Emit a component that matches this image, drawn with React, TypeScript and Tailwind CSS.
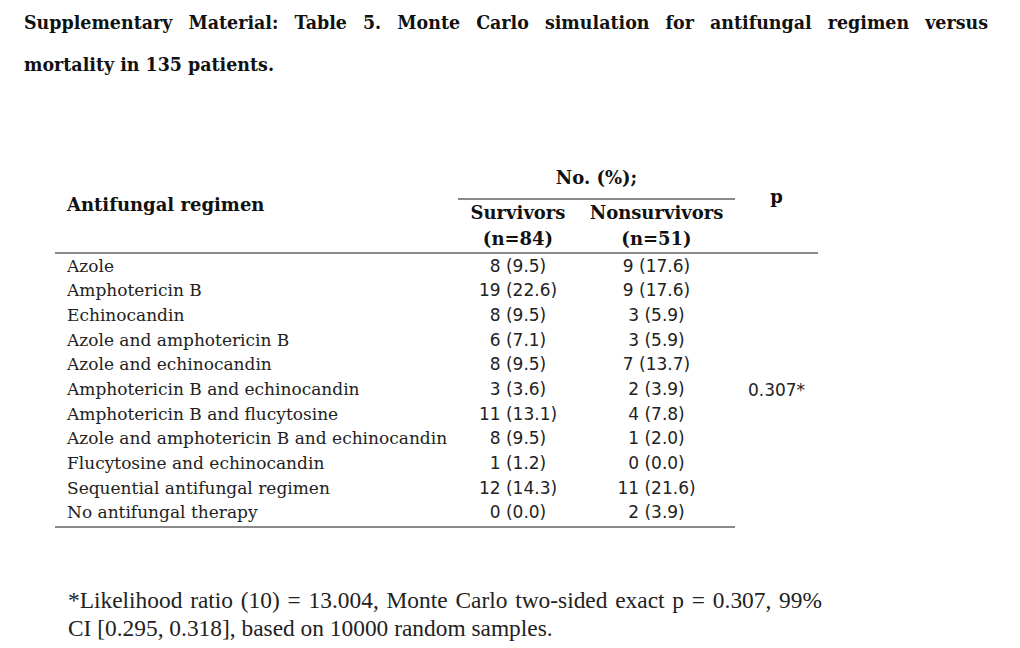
const SERIF = "font-['DejaVu_Serif',serif]";
const SERIF_COND = "font-['DejaVu_Serif_Condensed','DejaVu_Serif',serif]";
const SANS = "font-['DejaVu_Sans','Liberation_Sans',sans-serif]";

const ROWS: [string, string, string][] = [
  ["Azole", "8 (9.5)", "9 (17.6)"],
  ["Amphotericin B", "19 (22.6)", "9 (17.6)"],
  ["Echinocandin", "8 (9.5)", "3 (5.9)"],
  ["Azole and amphotericin B", "6 (7.1)", "3 (5.9)"],
  ["Azole and echinocandin", "8 (9.5)", "7 (13.7)"],
  ["Amphotericin B and echinocandin", "3 (3.6)", "2 (3.9)"],
  ["Amphotericin B and flucytosine", "11 (13.1)", "4 (7.8)"],
  ["Azole and amphotericin B and echinocandin", "8 (9.5)", "1 (2.0)"],
  ["Flucytosine and echinocandin", "1 (1.2)", "0 (0.0)"],
  ["Sequential antifungal regimen", "12 (14.3)", "11 (21.6)"],
  ["No antifungal therapy", "0 (0.0)", "2 (3.9)"],
];

export default function App() {
  return (
    <div className="h-[648px] w-[1020px] bg-white px-[24px] pt-[2px] text-[#111]">
      <div className={`${SERIF_COND} w-[964px] text-[19.4px] font-bold leading-[42px]`}>
        <p className="text-justify [text-align-last:justify]">
          Supplementary Material: Table 5. Monte Carlo simulation for antifungal regimen versus
        </p>
        <p>mortality in 135 patients.</p>
      </div>

      <div className="ml-[31px] mt-[79px] w-[763px]">
        {/* header */}
        <div className={`${SERIF} flex border-b-2 border-[#8a8a8a] text-[18px] font-bold`}>
          <div className="flex w-[403px] items-center pb-[8px] pl-[12px]">Antifungal regimen</div>
          <div className="w-[277px]">
            <div className="h-[35px] border-b-2 border-[#8a8a8a] text-center leading-[26px]">No. (%);</div>
            <div className="flex leading-[26px]">
              <div className="w-[120px] text-center">Survivors<br />(n=84)</div>
              <div className="w-[157px] text-center">Nonsurvivors<br />(n=51)</div>
            </div>
          </div>
          <div className="flex w-[83px] items-center justify-center pb-[24px]">p</div>
        </div>

        {/* body */}
        <div className="flex">
          <div className="w-[680px] border-b-2 border-[#8a8a8a]">
            {ROWS.map(([name, s, n]) => (
              <div key={name} className="flex h-[24.7px] items-center text-[17px] text-[#222]">
                <div className={`${SERIF} w-[403px] pl-[12px]`}>{name}</div>
                <div className={`${SANS} w-[120px] text-center`}>{s}</div>
                <div className={`${SANS} w-[157px] text-center`}>{n}</div>
              </div>
            ))}
          </div>
          <div className={`${SANS} w-[83px] pt-[123.5px] text-center text-[17px] leading-[24.7px] text-[#222]`}>
            0.307*
          </div>
        </div>

        <div className="mt-[58px] w-[767px] pl-[13px] font-['Liberation_Serif',serif] text-[23.4px] leading-[28px] text-[#222]">
          <p className="text-justify [text-align-last:justify]">
            *Likelihood ratio (10) = 13.004, Monte Carlo two-sided exact p = 0.307, 99%
          </p>
          <p>CI [0.295, 0.318], based on 10000 random samples.</p>
        </div>
      </div>
    </div>
  );
}
